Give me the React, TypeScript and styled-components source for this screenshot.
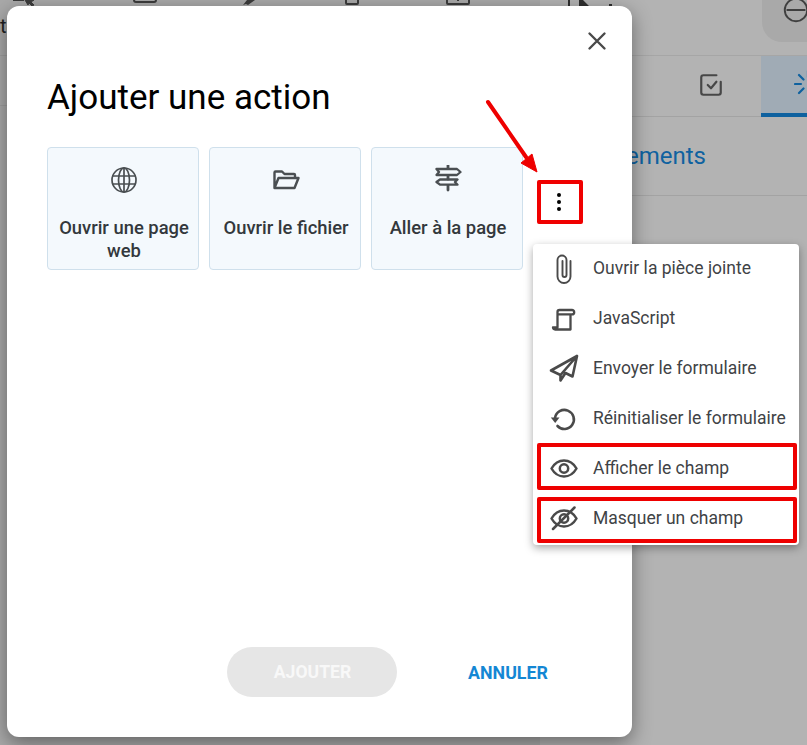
import React from 'react';
import styled, { createGlobalStyle } from 'styled-components';

const GlobalStyle = createGlobalStyle`
  html, body {
    margin: 0;
    padding: 0;
    background: #b3b3b3;
  }
  body {
    width: 807px;
    height: 745px;
    overflow: hidden;
    font-family: Roboto, "Liberation Sans", sans-serif;
  }
`;

const Page = styled.div`
  position: relative;
  width: 807px;
  height: 745px;
  overflow: hidden;
  display: flex;
  background: #b3b3b3;
`;

const LeftPanel = styled.div`
  width: 540px;
  flex: none;
  background: #a9a9a9;
`;

const RightPanel = styled.div`
  flex: 1;
  min-width: 0;
`;

const LeftToolbar = styled.div`
  height: 55px;
  border-bottom: 1px solid #9e9e9e;
  color: #1f1f1f;
  font-size: 20px;
  line-height: 20px;
`;

const LeftRow = styled.div`
  height: 49px;
  border-bottom: 1px solid #9e9e9e;
`;

const TopIcons = styled.div`
  height: 6px;
  display: flex;
  overflow: hidden;
  color: #3c3c3c;
  margin-bottom: 10px;
`;

const TopIcon = styled.svg<{ $gap: number }>`
  flex: none;
  margin-left: ${p => p.$gap}px;
`;

const Toolbar = styled.div`
  height: 55px;
  border-bottom: 1px solid #a6a6a6;
  display: flex;
  justify-content: space-between;
`;

const RightIcons = styled(TopIcons)`
  margin: 0;
`;

const RoundButton = styled.div`
  width: 45px;
  height: 42px;
  flex: none;
  background: #a9a9a9;
  border-bottom-left-radius: 20px;
  padding-left: 19px;
  box-sizing: border-box;
  color: #3f3f3f;
  overflow: hidden;
`;

const Tabs = styled.div`
  height: 60px;
  border-bottom: 1px solid #a3a3a3;
  display: flex;
  justify-content: flex-end;
`;

const Tab = styled.div`
  width: 100px;
  display: flex;
  align-items: center;
  justify-content: center;
  padding-bottom: 2px;
  box-sizing: border-box;
  color: #474747;
`;

const ActiveTab = styled.div`
  width: 46px;
  box-sizing: border-box;
  display: flex;
  align-items: center;
  padding: 0 0 2px 33px;
  background: #a0abb5;
  border-bottom: 4px solid #0e619f;
  margin-bottom: -1px;
  overflow: hidden;
`;

const SectionTitle = styled.div`
  height: 79px;
  border-bottom: 1px solid #a3a3a3;
  box-sizing: border-box;
  display: flex;
  align-items: center;
  justify-content: flex-end;
  padding-right: 101px;
  color: #0f62a0;
  font-size: 24px;
  white-space: nowrap;
`;

const Dialog = styled.div`
  position: absolute;
  left: 7px;
  top: 6px;
  width: 625px;
  height: 731px;
  box-sizing: border-box;
  background: #fff;
  border-radius: 12px;
  padding: 72px 40px 40px;
  display: flex;
  flex-direction: column;
  box-shadow: 0 6px 20px rgba(0, 0, 0, 0.42);
`;

const CloseButton = styled.button`
  position: absolute;
  right: 24px;
  top: 24px;
  width: 22px;
  height: 22px;
  padding: 0;
  border: 0;
  background: none;
  color: #4a4a4a;
  display: flex;
`;

const Title = styled.h1`
  margin: 0;
  font-size: 35px;
  line-height: 40px;
  font-weight: 400;
  color: #000;
`;

const Cards = styled.div`
  display: flex;
  gap: 10px;
  margin-top: 29px;
`;

const Card = styled.div`
  width: 152px;
  height: 123px;
  box-sizing: border-box;
  background: #f4f9fd;
  border: 1px solid #cfe0ec;
  border-radius: 4px;
  padding: 17px 7px 0 9px;
  display: flex;
  flex-direction: column;
  align-items: center;
  color: #4a4f52;
`;

const CardLabel = styled.div`
  margin-top: 23px;
  font-size: 18.4px;
  line-height: 23px;
  font-weight: 500;
  color: #33383c;
  text-align: center;
`;

const MoreButton = styled.div`
  position: absolute;
  left: 530px;
  top: 174px;
  width: 46px;
  height: 44px;
  box-sizing: border-box;
  border: 4px solid #f00000;
  border-radius: 2px;
  padding-right: 2px;
  display: flex;
  flex-direction: column;
  align-items: center;
  justify-content: center;
  gap: 3px;
`;

const Dot = styled.span`
  width: 4px;
  height: 4px;
  border-radius: 50%;
  background: #000;
`;

const Actions = styled.div`
  margin-top: auto;
  display: flex;
  justify-content: flex-end;
  align-items: center;
  padding-right: 9px;
  gap: 36px;
`;

const AddButton = styled.div`
  width: 170px;
  height: 50px;
  box-sizing: border-box;
  padding-left: 1px;
  border-radius: 25px;
  background: #e6e6e6;
  color: #f8f8f8;
  font-size: 17.6px;
  font-weight: 700;
  display: flex;
  align-items: center;
  justify-content: center;
`;

const CancelButton = styled.div`
  width: 150px;
  color: #1487d4;
  font-size: 17.8px;
  font-weight: 700;
  text-align: center;
`;

const Menu = styled.div`
  position: absolute;
  left: 533px;
  top: 244px;
  width: 266px;
  box-sizing: border-box;
  background: #fff;
  border-radius: 4px;
  box-shadow: 0 3px 8px rgba(0, 0, 0, 0.35);
  padding-bottom: 1px;
`;

const MenuItem = styled.div`
  height: 50px;
  box-sizing: border-box;
  padding-bottom: 2px;
  display: flex;
  align-items: center;
  color: #3f4346;
  font-size: 17.5px;
  white-space: nowrap;
`;

const MenuIcon = styled.span`
  width: 60px;
  height: 32px;
  display: flex;
  align-items: center;
  justify-content: center;
  padding-left: 1px;
  box-sizing: border-box;
  color: #4a4a4a;
`;

const Highlight = styled.div<{ $top: number; $height: number }>`
  position: absolute;
  left: 4px;
  top: ${p => p.$top}px;
  width: 260px;
  height: ${p => p.$height}px;
  box-sizing: border-box;
  border: 4px solid #ee0000;
  border-radius: 2px;
`;

const ArrowLayer = styled.svg`
  position: absolute;
  left: 480px;
  top: 95px;
`;

const Icon: React.FC<{ size?: number; children: React.ReactNode }> = ({
  size = 28,
  children
}) => (
  <svg
    width={size}
    height={size}
    viewBox={`0 0 ${size} ${size}`}
    fill="none"
    stroke="currentColor"
    strokeLinecap="round"
    strokeLinejoin="round"
  >
    {children}
  </svg>
);

const EyeShape = () => (
  <>
    <path d="M1.500 14.500C4.500 9.300 9 6.500 14 6.500s9.500 2.800 12.500 8C23.500 19.700 19 22.500 14 22.500S4.500 19.700 1.500 14.500z" strokeWidth="2.500" />
    <circle cx="14" cy="14.500" r="4.200" strokeWidth="2.500" />
  </>
);

const menuItems = [
  {
    label: 'Ouvrir la pièce jointe',
    icon: (
      <Icon size={32}>
        <path d="M22.500 9v15.500a6.500 6.500 0 0 1-13 0V8a4.500 4.500 0 0 1 9 0v15a2 2 0 0 1-4 0V9" strokeWidth="1.900" />
      </Icon>
    )
  },
  {
    label: 'JavaScript',
    icon: (
      <Icon>
        <path d="M7.500 23.500V8a2 2 0 0 1 2-2h12.500a2.200 2.200 0 0 1 0 4.400H8M20.500 10.400V25.500H5.200a2.200 2.200 0 0 1-2.200-2h4.500" strokeWidth="2.300" />
      </Icon>
    )
  },
  {
    label: 'Envoyer le formulaire',
    icon: (
      <Icon size={32}>
        <path d="M29 4 3 18.500l9.500 4.500L29 4l-4.500 20.500-7-3.500-5 7.500V23" strokeWidth="2.600" />
      </Icon>
    )
  },
  {
    label: 'Réinitialiser le formulaire',
    icon: (
      <Icon>
        <path d="M5 14A9.500 9.500 0 1 1 7.500 22" strokeWidth="2.600" />
        <path d="M.8 13.500H9.500L5.200 19z" fill="currentColor" stroke="none" />
      </Icon>
    )
  },
  {
    label: 'Afficher le champ',
    icon: (
      <Icon>
        <EyeShape />
      </Icon>
    )
  },
  {
    label: 'Masquer un champ',
    icon: (
      <Icon>
        <EyeShape />
        <path d="M3 25 24.500 3.500" strokeWidth="2.500" />
      </Icon>
    )
  }
];

export default function App() {
  return (
    <Page>
      <GlobalStyle />
      <LeftPanel>
        <LeftToolbar>
          <TopIcons>
            <TopIcon $gap={13} width="22" height="6" viewBox="0 0 22 6">
              <path d="M0 .5h11M12 0l3 5 1-2 3 3 2-1-3-3 3-2z" fill="currentColor" stroke="currentColor" strokeWidth="1" />
            </TopIcon>
            <TopIcon $gap={98} width="24" height="6" viewBox="0 0 24 6" fill="none" stroke="currentColor" strokeWidth="2">
              <path d="M1-4v4a2 2 0 0 0 2 2h18a2 2 0 0 0 2-2v-4" />
            </TopIcon>
            <TopIcon $gap={85} width="13" height="6" viewBox="0 0 13 6" fill="currentColor">
              <path d="M5 0 1 5l3-1 2 1 7-5z" />
            </TopIcon>
            <TopIcon $gap={90} width="14" height="6" viewBox="0 0 14 6" fill="none" stroke="currentColor" strokeWidth="2">
              <path d="M1-4v7a1 1 0 0 0 1 1h10a1 1 0 0 0 1-1v-7" />
            </TopIcon>
            <TopIcon $gap={87} width="24" height="6" viewBox="0 0 24 6" fill="none" stroke="currentColor" strokeWidth="2">
              <path d="M1-4v7a1 1 0 0 0 1 1h20a1 1 0 0 0 1-1v-7M12-3v4" />
            </TopIcon>
          </TopIcons>
          te
        </LeftToolbar>
        <LeftRow />
      </LeftPanel>
      <RightPanel>
        <Toolbar>
          <RightIcons>
            <TopIcon $gap={28} width="46" height="6" viewBox="0 0 46 6" fill="#2f2f2f">
              <path d="M0 0h2v6H0zM11 0h4l6 6H11zM41 4h3v2h-3z" />
            </TopIcon>
          </RightIcons>
          <RoundButton>
            <svg width="30" height="30" viewBox="0 0 24 24" fill="none" stroke="currentColor" strokeWidth="1.500" strokeLinecap="round">
              <circle cx="12" cy="8" r="9" />
              <path d="M5 8h14" />
            </svg>
          </RoundButton>
        </Toolbar>
        <Tabs>
          <Tab>
            <svg width="26" height="26" viewBox="0 0 24 24" fill="none" stroke="currentColor" strokeWidth="2" strokeLinecap="round" strokeLinejoin="round">
              <path d="M3 5a2 2 0 0 1 2-2h12M21 9v10a2 2 0 0 1-2 2H5a2 2 0 0 1-2-2V5" />
              <path d="m9 12 3 3 5-6" />
            </svg>
          </Tab>
          <ActiveTab>
            <svg width="28" height="28" viewBox="0 0 28 28" fill="none" stroke="#0e619f" strokeWidth="2.200" strokeLinecap="round" style={{ flex: 'none' }}>
              <path d="M14 1v6M5 5l4.500 4.500M1 14h6M5 23l4.500-4.500" />
            </svg>
          </ActiveTab>
        </Tabs>
        <SectionTitle>ements</SectionTitle>
      </RightPanel>

      <Dialog>
        <CloseButton aria-label="Fermer">
          <svg width="22" height="22" viewBox="0 0 22 22" fill="none" stroke="currentColor" strokeWidth="2.400" strokeLinecap="round">
            <path d="M3.500 3.500l15 15M18.500 3.500l-15 15" />
          </svg>
        </CloseButton>
        <Title>Ajouter une action</Title>
        <Cards>
          <Card>
            <Icon>
              <circle cx="14" cy="15" r="12" strokeWidth="1.700" />
              <ellipse cx="14" cy="15" rx="5.500" ry="12" strokeWidth="1.700" />
              <path d="M3 11h22M3 19h22M14 3v24" strokeWidth="1.700" />
            </Icon>
            <CardLabel>Ouvrir une page web</CardLabel>
          </Card>
          <Card>
            <Icon>
              <path d="M2.500 23V7.500a1 1 0 0 1 1-1h6.500l2.500 2.500H22a1 1 0 0 1 1 1v3M2.500 23l4-10h20L22.500 23z" strokeWidth="2.400" />
            </Icon>
            <CardLabel>Ouvrir le fichier</CardLabel>
          </Card>
          <Card>
            <Icon>
              <path d="M14 0v3.500M14 10.500v3.500M14 20.500V25" strokeWidth="2.800" />
              <path d="M2.500 4h20.500l3.500 3-3.500 3h-20.500L5 7zM23.500 14.500H6L2.500 17 6 19.700h17.500L21 17z" strokeWidth="2.300" />
            </Icon>
            <CardLabel>Aller à la page</CardLabel>
          </Card>
        </Cards>
        <MoreButton>
          <Dot />
          <Dot />
          <Dot />
        </MoreButton>
        <Actions>
          <AddButton>AJOUTER</AddButton>
          <CancelButton>ANNULER</CancelButton>
        </Actions>
      </Dialog>

      <ArrowLayer width="70" height="90" viewBox="0 0 70 90">
        <path d="M8 7 46 62" stroke="#ee0000" strokeWidth="4" strokeLinecap="round" />
        <path d="M57 77 41 68 52 59z" fill="#ee0000" stroke="#ee0000" strokeWidth="1" strokeLinejoin="round" />
      </ArrowLayer>

      <Menu>
        {menuItems.map(item => (
          <MenuItem key={item.label}>
            <MenuIcon>{item.icon}</MenuIcon>
            {item.label}
          </MenuItem>
        ))}
        <Highlight $top={199} $height={47} />
        <Highlight $top={253} $height={46} />
      </Menu>
    </Page>
  );
}
